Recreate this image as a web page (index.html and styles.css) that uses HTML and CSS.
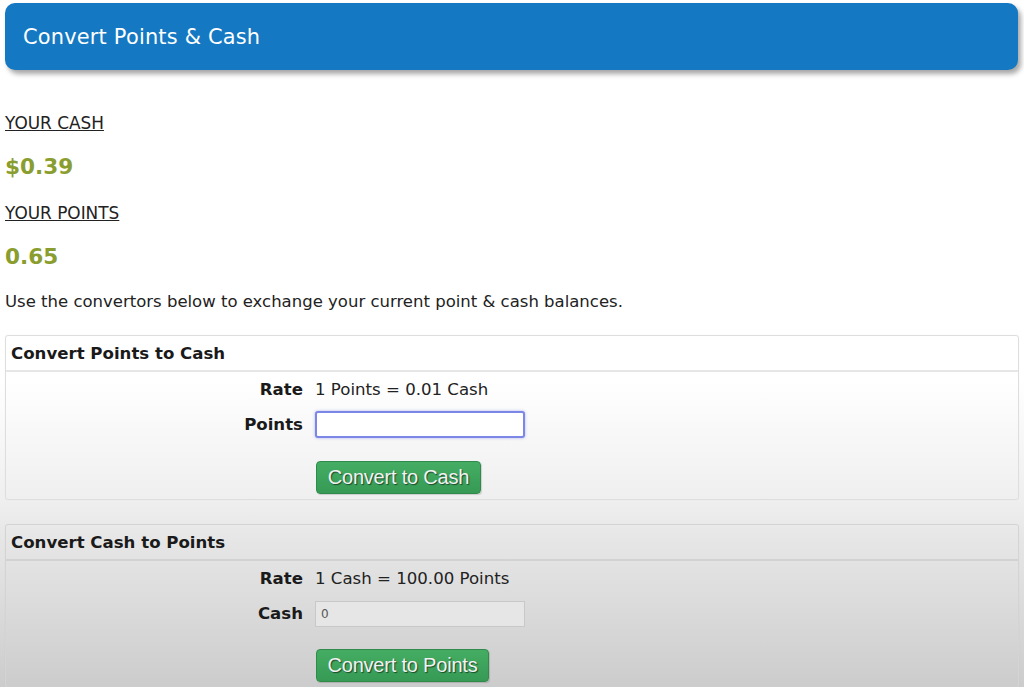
FILE: index.html
```html
<!DOCTYPE html>
<html>
<head>
<meta charset="utf-8">
<title>Convert Points &amp; Cash</title>
<link rel="stylesheet" href="styles.css">
</head>
<body>
<div class="page">
  <header class="banner"><h1 class="banner-title">Convert Points &amp; Cash</h1></header>

  <section class="balances">
    <div class="bal-label">YOUR CASH</div>
    <div class="bal-value">$0.39</div>
    <div class="bal-label">YOUR POINTS</div>
    <div class="bal-value">0.65</div>
    <p class="intro">Use the convertors below to exchange your current point &amp; cash balances.</p>
  </section>

  <section class="panel">
    <div class="panel-head">Convert Points to Cash</div>
    <div class="panel-body">
      <div class="row"><span class="lbl">Rate</span><span class="val">1 Points = 0.01 Cash</span></div>
      <div class="row"><span class="lbl">Points</span><span class="val"><input class="field focused" type="text" value=""></span></div>
      <div class="row row-btn"><span class="lbl"></span><span class="val"><button class="btn btn-cash">Convert to Cash</button></span></div>
    </div>
  </section>

  <section class="panel panel-2">
    <div class="panel-head">Convert Cash to Points</div>
    <div class="panel-body">
      <div class="row"><span class="lbl">Rate</span><span class="val">1 Cash = 100.00 Points</span></div>
      <div class="row"><span class="lbl">Cash</span><span class="val"><input class="field disabled" type="text" value="0"></span></div>
      <div class="row row-btn row-btn-2"><span class="lbl"></span><span class="val"><button class="btn btn-points">Convert to Points</button></span></div>
    </div>
  </section>
</div>
</body>
</html>
```
FILE: styles.css
```css
html, body {
  margin: 0;
  padding: 0;
  height: 100%;
}
body {
  font-family: "DejaVu Sans", Verdana, sans-serif;
  color: #1a1a1a;
  background: linear-gradient(to bottom, #ffffff 0px, #ffffff 380px, #efefef 500px, #e6e6e6 540px, #dcdcdc 600px, #cccccc 687px);
  background-repeat: no-repeat;
  min-height: 687px;
  overflow: hidden;
}
.page {
  padding: 3px 5px 0 5px;
}
.banner {
  height: 67px;
  margin-right: 1px;
  background: #1479c2;
  border-radius: 10px;
  box-shadow: 3px 4px 5px rgba(0, 0, 0, 0.35);
  display: flex;
  align-items: center;
}
.banner-title {
  margin: 0 0 0 18px;
  font-size: 20.9px;
  font-weight: normal;
  color: #ffffff;
  letter-spacing: 0.2px;
}
.balances {
  padding-top: 42px;
}
.bal-label {
  font-size: 16.9px;
  text-decoration: underline;
  color: #222;
  line-height: 22px;
}
.bal-value {
  font-size: 21.6px;
  font-weight: bold;
  color: #8a9d2f;
  line-height: 26px;
  margin: 20px 0 22px 0;
}
.bal-value + .bal-label + .bal-value {
  margin-bottom: 21px;
}
.intro {
  margin: 0 0 22px 0;
  font-size: 16.5px;
  line-height: 22px;
  color: #222;
}
.panel {
  border: 1px solid #dedede;
  border-radius: 3px;
  box-shadow: 0 0 1px rgba(0,0,0,0.08);
}
.panel-2 {
  margin-top: 24px;
  border-color: #d4d4d4;
}
.panel-head {
  font-size: 16.6px;
  font-weight: bold;
  padding: 0 5px;
  height: 34px;
  line-height: 35px;
  border-bottom: 2px solid #e6e6e6;
}
.panel-2 .panel-head {
  border-bottom-color: #d2d2d2;
}
.panel-body {
  padding: 0 0 5px 0;
}
.row {
  display: grid;
  grid-template-columns: 297px 1fr;
  column-gap: 12px;
  align-items: center;
  font-size: 16.6px;
  height: 35px;
}
.row-btn {
  padding-top: 19px;
  height: 33px;
}
.row-btn-2 {
  padding-top: 18px;
}
.lbl {
  text-align: right;
  font-weight: bold;
}
.val {
  color: #222;
  display: flex;
  align-items: center;
}
.field {
  box-sizing: border-box;
  width: 210px;
  height: 27px;
  font-family: "DejaVu Sans", Verdana, sans-serif;
  font-size: 12px;
  padding: 0 5px;
  margin: 0;
  background: #fff;
}
.field.focused {
  border: 2px solid #7b86e6;
  border-radius: 3px;
  box-shadow: 0 0 3px rgba(100, 110, 230, 0.5);
}
.field.disabled {
  height: 26px;
  border: 1px solid #c8c8c8;
  background: #e6e6e6;
  color: #555;
}
.btn {
  font-family: "Liberation Sans", Arial, sans-serif;
  font-size: 20px;
  color: #f2f2f2;
  text-shadow: 1px 1px 1px rgba(0, 0, 0, 0.55);
  background: linear-gradient(to bottom, #44ad63, #369a55);
  border: 1px solid #2f8a4b;
  border-radius: 4px;
  box-shadow: 1px 1px 1px rgba(0, 0, 0, 0.15);
  height: 33px;
  padding: 0;
  margin-left: 1px;
  letter-spacing: -0.2px;
  cursor: pointer;
}
.btn-cash {
  width: 165px;
}
.btn-points {
  width: 173px;
}
```
